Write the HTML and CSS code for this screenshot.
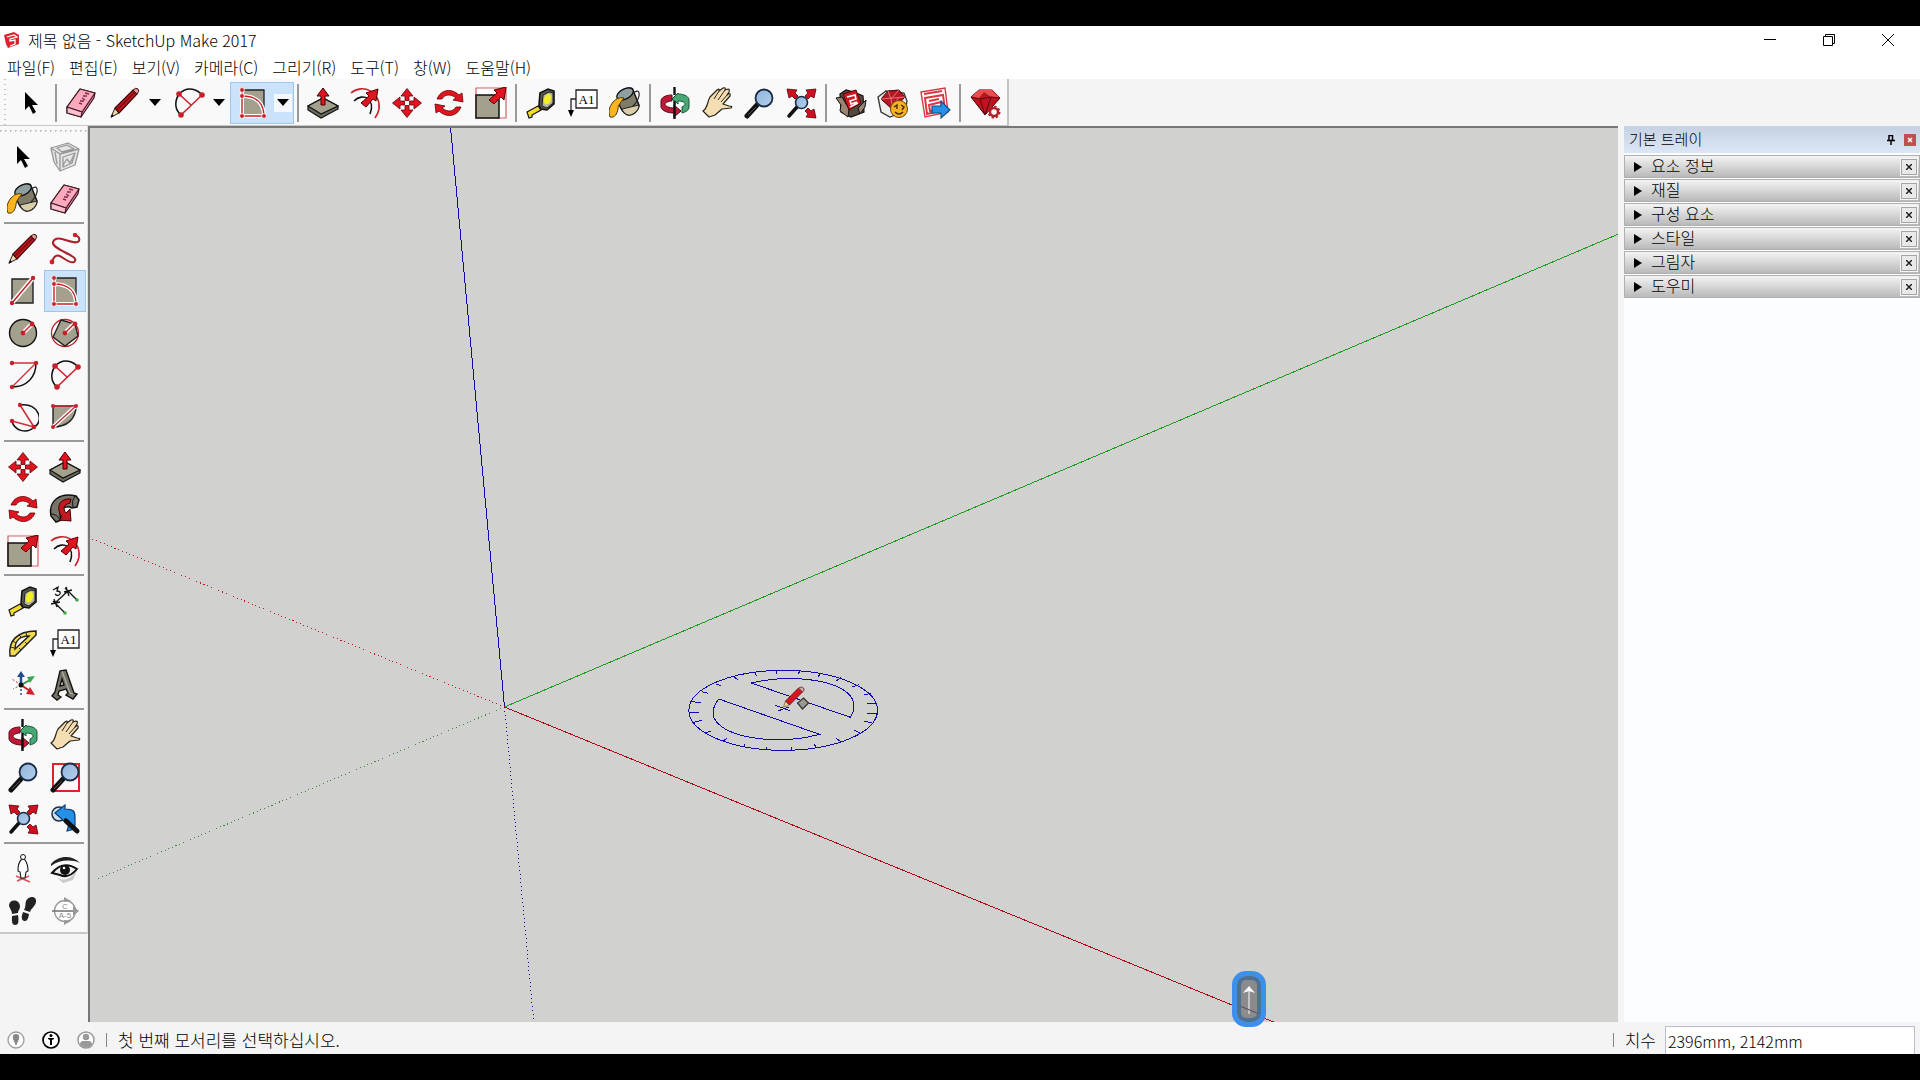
FILE: index.html
```
<!DOCTYPE html>
<html lang="ko">
<head>
<meta charset="utf-8">
<title>제목 없음 - SketchUp Make 2017</title>
<link rel="stylesheet" href="styles.css">
</head>
<body>
<svg class="defs" aria-hidden="true">
<defs>
<linearGradient id="lens" x1="0" y1="0" x2="1" y2="1"><stop offset="0" stop-color="#8fb4dc"/><stop offset="1" stop-color="#b4d0ec"/></linearGradient>
<symbol id="i-select" viewBox="0 0 32 32"><path d="M10 5v18l4-4 4 8 3-2-4-7h6z" fill="#000"/></symbol>
<symbol id="i-component" viewBox="0 0 32 32"><g fill="#e4e4e4" stroke="#989898" stroke-width="1.3" stroke-linejoin="round"><path d="M2 7l17-5 11 6-4 16-15 6-6-9z"/><path d="M2 7l9 6 19-5M11 13v17M6 11l2 12M14 16l12-4-3 10-9 4zM8 7l10-3 7 4-12 3z"/><path d="M14 24l4-6 3 4 4-8" fill="none"/></g></symbol>
<symbol id="i-eraser" viewBox="0 0 32 32"><g stroke="#3c1820" stroke-width="1.2" stroke-linejoin="round"><path d="M2 20L15 2l15 4-1 5-13 19L2 26z" fill="#ee7f9f"/><path d="M2 20L15 2l15 4-13 19z" fill="#ffa9bf"/><path d="M2 20l15 5-1 5L2 26z" fill="#fbc0d0"/></g><path d="M14 16l3 1M15 14l4 0M17 11l3 2M18 9l4 0M20 6l4 1" stroke="#7c2c44" stroke-width="1.4"/></symbol>
<symbol id="i-pencil" viewBox="0 0 32 32"><path d="M2 30l4-9 4 5z" fill="#efd7a6" stroke="#222" stroke-width="1"/><path d="M6 21L24 3l4 4-18 19z" fill="#c4161c" stroke="#3a0a0a" stroke-width="1.2"/><path d="M8 23L26 5" stroke="#7b0b10" stroke-width="1.4"/><path d="M24 3q3-3 5-1t-1 5z" fill="#d99" stroke="#411"/><path d="M1.500 31l1.500-4 2 2z" fill="#111"/></symbol>
<symbol id="i-arc2" viewBox="0 0 32 32"><path d="M6 7C15-2 25 3 29 8M6 7C1 15 2 23 8 28" fill="none" stroke="#111" stroke-width="1.5"/><path d="M6 7l12 11M29 8L8 28" stroke="#d0202c" stroke-width="1.6"/><g fill="#c8202a"><circle cx="6" cy="7" r="2.800"/><circle cx="29" cy="8" r="2.800"/><circle cx="8" cy="28" r="2.800"/></g></symbol>
<symbol id="i-rotrect" viewBox="0 0 32 32"><path d="M5 3h22v25H5z" fill="#a3a08d" stroke="#222" stroke-width="1.300"/><path d="M5 3v26h22C27 17 20 9 5 9" fill="none" stroke="#fff" stroke-width="4"/><path d="M5 3v26h22C27 17 20 9 5 9" fill="none" stroke="#c8202a" stroke-width="1.400"/><g fill="#c8202a" stroke="#fff" stroke-width=".8"><circle cx="5" cy="3" r="2.400"/><circle cx="5" cy="9" r="2.400"/><circle cx="5" cy="29" r="2.400"/><circle cx="27" cy="29" r="2.400"/></g></symbol>
<symbol id="i-pushpull" viewBox="0 0 32 32"><path d="M1 19l15-8 15 8v3l-17 9L1 23z" fill="#6d6b5e" stroke="#111" stroke-width="1.200"/><path d="M1 19l15-8 15 8-17 8z" fill="#a3a08d" stroke="#111" stroke-width="1.200"/><path d="M14 18h4V9h4l-6-8-6 8h4z" fill="#e01420" stroke="#400" stroke-width="1"/></symbol>
<symbol id="i-offset" viewBox="0 0 32 32"><path d="M2 6C14-4 32 5 30 22q-1 5-4 9" fill="none" stroke="#d0202c" stroke-width="1.600"/><path d="M5 14C14 5 27 12 21 27" fill="none" stroke="#111" stroke-width="1.600"/><path d="M12 16l8-7-3-3 12-4-2 12-3-2-7 8z" fill="#e01420" stroke="#500" stroke-width="1"/></symbol>
<symbol id="i-move" viewBox="0 0 32 32"><g fill="#e01420" stroke="#600" stroke-width=".8"><path id="mv" d="M14 13.500V9h-4l6-7.500L22 9h-4v4.500z"/><use href="#mv" transform="rotate(90 16 16)"/><use href="#mv" transform="rotate(180 16 16)"/><use href="#mv" transform="rotate(270 16 16)"/></g></symbol>
<symbol id="i-rotate" viewBox="0 0 32 32"><g fill="#e01420" stroke="#600" stroke-width=".8"><path id="rt" d="M4 12C8 2 19 1 26 8l3-2 1 9-10-2 3-2C17 6 11 8 9 12z"/><use href="#rt" transform="rotate(180 16 16)"/></g></symbol>
<symbol id="i-scale" viewBox="0 0 32 32"><path d="M1 1h30v30H1z" fill="#fff" stroke="#d2606a" stroke-width="1.200"/><path d="M1 8h23v23H1z" fill="#a3a08d" stroke="#111" stroke-width="1.500"/><path d="M14 13l8-7-3-3 12-3-2 13-3-3-7 7z" fill="#e01420" stroke="#500" stroke-width="1"/></symbol>
<symbol id="i-tape" viewBox="0 0 32 32"><path d="M2 25l11-6 3 4-9 5v2l-3 1z" fill="#f3dc2e" stroke="#111" stroke-width="1.200"/><path d="M15 6l8-4 6 2v13l-7 6-6-1-2-4z" fill="#5a594f" stroke="#111" stroke-width="1.600"/><path d="M18 8l6-3 4 1v10l-6 5-5-2z" fill="#b7b5a6" stroke="#222"/><ellipse cx="22.500" cy="12" rx="3.500" ry="5.500" fill="#f4ee26" transform="rotate(20 22 12)"/></symbol>
<symbol id="i-text" viewBox="0 0 32 32"><path d="M9 3h21v18H9z" fill="#fff" stroke="#222" stroke-width="1.300"/><path d="M9 12H4v12" fill="none" stroke="#222" stroke-width="1.300"/><path d="M1 23h6l-3 7z" fill="#000"/><text x="19.500" y="16.500" class="glyph">A1</text></symbol>
<symbol id="i-paint" viewBox="0 0 32 32"><path d="M9 7C15 0 23 0 24 3l6 15c0 6-7 11-11 10C13 26 8 17 9 7z" fill="#807b68" stroke="#111" stroke-width="1.400"/><path d="M13 22l17-4c0 6-7 11-11 10-3-1-5-3-6-6z" fill="#d9cdaa" stroke="#222"/><ellipse cx="16" cy="7" rx="9" ry="5" fill="#8fa0a0" stroke="#111" stroke-width="1.300" transform="rotate(-28 16 7)"/><path d="M24 6q7-5 6 3-1 5-6 10" fill="none" stroke="#222" stroke-width="1.200"/><path d="M15 11C10 10 7 12 4 15 0 20-1 25 1 30c5 1 7-3 8-8 0-4 3-7 6-11z" fill="#fcb51e" stroke="#4a3205" stroke-width="1"/></symbol>
<symbol id="i-orbit" viewBox="0 0 32 32"><path d="M13 8C6 8 2 11 2 14v6c1 4 7 6 13 6v4l7-6-7-6v3c-5 0-9-2-9-4 0-1 3-3 7-3z" fill="#c11836" stroke="#500a18" stroke-width="1"/><path d="M19 7c7 0 11 3 11 6v7c0 3-3 5-7 6v-6c2-1 3-2 3-3 0-2-3-3-7-3v3l-6-5 6-6z" fill="#48a774" stroke="#155434" stroke-width="1"/><path d="M15.500 0v8M15.500 14v18" stroke="#111" stroke-width="2.400"/></symbol>
<symbol id="i-hand" viewBox="0 0 32 32"><path d="M2 24c5-3 4-9 7-14L16 3q3-2 2 1l4-3q3-1 2 2l3-1q2 0 1 3l-2 3q4-3 3 1l-7 8 6 2q4 0 2 2l-9 1-7 6-6 2z" fill="#f6deb4" stroke="#2a2318" stroke-width="1.200" stroke-linejoin="round"/><path d="M18 4l-5 8M24 3l-7 10M27 7l-7 8" fill="none" stroke="#2a2318"/></symbol>
<symbol id="i-zoom" viewBox="0 0 32 32"><path d="M14 18L4 29" stroke="#111" stroke-width="5" stroke-linecap="round"/><path d="M13 20l-8 8" stroke="#555" stroke-width="1"/><circle cx="21" cy="11" r="8.500" fill="url(#lens)" stroke="#1c2c44" stroke-width="1.800"/></symbol>
<symbol id="i-extents" viewBox="0 0 32 32"><path d="M12 20L4 29" stroke="#111" stroke-width="3.500" stroke-linecap="round"/><circle cx="16.500" cy="15.500" r="6" fill="url(#lens)" stroke="#1c2c44" stroke-width="1.600"/><g fill="#d01020" stroke="#500" stroke-width=".8"><path d="M31 2l-2 9-3-2-3 3-3-3 3-3-2-3z"/><path d="M2 2l2 9 3-2 3 3 3-3-3-3 2-3z"/><path d="M31 31l-2-9-3 2-3-3-3 3 3 3-2 3z"/></g></symbol>
<symbol id="i-warehouse" viewBox="0 0 32 32"><path d="M5 7l6-4 8 2 9 4 1 16-13 5L6 25z" fill="#55483c" stroke="#111" stroke-width="1.200"/><path d="M1 11l6-1 7 12-1 8-8-6 1-6zM31 13l-8 8 2 6 5-7z" fill="#9a8471" stroke="#111"/><path d="M8 7l13-4 5 13-12 7z" fill="#d01722" stroke="#500"/><path d="M12 10l8-2 1 4-6 2 1 3 6-2M15 20l8-4" stroke="#fff" stroke-width="1.600" fill="none"/></symbol>
<symbol id="i-extension" viewBox="0 0 32 32"><path d="M1 10l8-6 18 2 3 8-2 10-15 6-9-5z" fill="#eee" stroke="#333" stroke-width="1.300"/><path d="M4 12l7-8 11-1 6 7-12 13z" fill="#b31825" stroke="#400"/><path d="M4 12l24-2M11 4l3 8 8-9M14 12l2 11 5-12" fill="none" stroke="#f07078"/><circle cx="22" cy="22" r="8.500" fill="#f6b125" stroke="#6a4305"/><path d="M17 20l3-2v4M24 18l3 2-2 3M18 25q4 4 8 0" fill="none" stroke="#432a05" stroke-width="1.400"/></symbol>
<symbol id="i-layout" viewBox="0 0 32 32"><path d="M2 5l24-4 3 24-23 5z" fill="#fff" stroke="#d73843" stroke-width="1.400"/><path d="M5 7l18-3M6 11l18-3 2 15-18 4zM10 14l10-2M10 18l12-3 1 7-12 2z" fill="none" stroke="#d73843" stroke-width="2"/><path d="M13 19h9v-5l9 9-9 8v-5h-9z" fill="#2590e8" stroke="#104a85" stroke-width="1.100"/></symbol>
<symbol id="i-ruby" viewBox="0 0 32 32"><path d="M2 10l8-7h13l8 8-15 17z" fill="#bc1420" stroke="#400"/><path d="M2 10l8-7h13l8 8-9-1-7-5-5 6z" fill="#ee4b50"/><path d="M2 10l9 2 11-2 9 1M11 12l5 16 6-18" fill="none" stroke="#5e0710"/><circle cx="25" cy="25" r="4" fill="#fff" stroke="#b3202a" stroke-width="2.500"/><circle cx="25" cy="25" r="5.700" fill="none" stroke="#b3202a" stroke-width="1.600" stroke-dasharray="2.400 2"/></symbol>
<symbol id="i-freehand" viewBox="0 0 32 32"><path d="M3 29c5-16 14 3 22 0C33 23 2 17 4 9 8-1 25 14 30 8c1-3-1-5-4-6" fill="none" stroke="#a8202a" stroke-width="2"/><circle cx="3" cy="29" r="2.400" fill="#d0202c"/><circle cx="26" cy="2" r="2.200" fill="#d0202c"/></symbol>
<symbol id="i-rect" viewBox="0 0 32 32"><path d="M5 4h21v24H5z" fill="#a3a08d" stroke="#222" stroke-width="1.400"/><path d="M5 28L26 3" stroke="#fff" stroke-width="4.500"/><path d="M5 28L26 3" stroke="#c8202a" stroke-width="1.500"/><circle cx="5" cy="28" r="2.200" fill="#c8202a"/><circle cx="26" cy="3" r="2.200" fill="#c8202a"/></symbol>
<symbol id="i-circle" viewBox="0 0 32 32"><circle cx="16" cy="16" r="13.500" fill="#a3a08d" stroke="#111" stroke-width="1.400"/><path d="M16 16l9-9" stroke="#fff" stroke-width="4.500"/><path d="M16 16l9-9" stroke="#c8202a" stroke-width="1.500"/><circle cx="16" cy="16" r="2.400" fill="#c8202a"/><circle cx="25" cy="7" r="2.400" fill="#c8202a"/></symbol>
<symbol id="i-polygon" viewBox="0 0 32 32"><circle cx="16" cy="16" r="13.500" fill="#fff" stroke="#c8202a" stroke-width="1.300"/><path d="M12 3l14 4 3 12-13 10-12-9z" fill="#a3a08d" stroke="#222" stroke-width="1.400"/><path d="M16 16l9-9" stroke="#fff" stroke-width="4.500"/><path d="M16 16l9-9" stroke="#c8202a" stroke-width="1.500"/><circle cx="16" cy="16" r="2.400" fill="#c8202a"/><circle cx="26" cy="7" r="2.400" fill="#c8202a"/></symbol>
<symbol id="i-arc" viewBox="0 0 32 32"><path d="M29 4C29 18 20 28 5 28" fill="none" stroke="#111" stroke-width="1.500"/><path d="M5 4h24L5 28" fill="none" stroke="#d0303a" stroke-width="1.400"/><g fill="#c8202a"><circle cx="5" cy="4" r="2.200"/><circle cx="29" cy="4" r="2.200"/><circle cx="5" cy="28" r="2.200"/></g></symbol>
<symbol id="i-arc3" viewBox="0 0 32 32"><path d="M13 4C33 1 37 22 27 26 19 34 7 29 5 20" fill="none" stroke="#111" stroke-width="1.500"/><path d="M13 4l14 22L5 20" fill="none" stroke="#d0303a" stroke-width="1.600"/><g fill="#c8202a"><circle cx="13" cy="4" r="2.200"/><circle cx="27" cy="26" r="2.200"/><circle cx="5" cy="20" r="2.200"/></g></symbol>
<symbol id="i-pie" viewBox="0 0 32 32"><path d="M4 5h23C27 18 18 26 4 26z" fill="#a3a08d" stroke="#222" stroke-width="1.400"/><path d="M4 26L27 5" stroke="#fff" stroke-width="4"/><path d="M4 26L27 5H4" fill="none" stroke="#c03038" stroke-width="1.400"/><g fill="#c8202a"><circle cx="4" cy="5" r="2"/><circle cx="27" cy="5" r="2"/><circle cx="4" cy="26" r="2"/></g></symbol>
<symbol id="i-follow" viewBox="0 0 32 32"><path d="M27 3C12-1-1 7 2 23l5 6 5-2C9 18 15 11 23 15l5-1 2-7z" fill="#77756a" stroke="#111" stroke-width="1.500"/><path d="M2 21q6 0 9 6M26 3q-4 5-2 11" stroke="#111" fill="none"/><path d="M11 21C7 11 13 5 22 6l-1 4c-7 2-7 6-4 10l4-4 1 12-12-1 3-3z" fill="#c31923" stroke="#400"/></symbol>
<symbol id="i-dimension" viewBox="0 0 32 32"><path d="M6 18L19 6M4 16l12 12M16 3l12 12M2 19l9-2M5 14l3 8M15 7l8-2M17 2l3 9" fill="none" stroke="#111" stroke-width="1.300"/><path d="M4 5l5-3-1 4q4 0 3 3-2 3-5 0" fill="none" stroke="#111" stroke-width="1.300"/><circle cx="16" cy="28" r="1.800" fill="#48a748"/><circle cx="28" cy="15" r="1.800" fill="#48a748"/></symbol>
<symbol id="i-protractor" viewBox="0 0 32 32"><path fill-rule="evenodd" d="M3 29C1 14 10 4 29 4v4L8 29zM8 22L22 9C13 9 8 14 8 22z" fill="#f2d94e" stroke="#222" stroke-width="1.500"/><path d="M4 20l3 1M6 14l3 2M12 8l2 2M19 6l1 3M12 21l2 2M18 15l2 2" stroke="#222"/></symbol>
<symbol id="i-axes" viewBox="0 0 32 32"><path d="M14 16V6" stroke="#224d91" stroke-width="2.500"/><path d="M10 8l4-6 4 6z" fill="#224d91"/><path d="M14 16l9-5" stroke="#2f8d42" stroke-width="2"/><path d="M20 8l8-1-5 7z" fill="#3da34e"/><path d="M14 16l9 6" stroke="#c0202a" stroke-width="2"/><path d="M23 18l5 8-9-1z" fill="#d0202c"/><path d="M14 16l-9-6" stroke="#d0202c" stroke-dasharray="2 2"/><path d="M14 16v12" stroke="#224d91" stroke-width="1.500" stroke-dasharray="2 2"/><path d="M14 16l-8 4" stroke="#2f8d42" stroke-dasharray="2 2"/><circle cx="14" cy="16" r="2.500" fill="#111"/></symbol>
<symbol id="i-3dtext" viewBox="0 0 32 32"><path fill-rule="evenodd" d="M11 2l6-1 8 23 3 1-4 5-7-4 2-2-2-4-7 2-1 4 3 2-4 3-5-4 3-4zM11 17l4-1-2-6z" fill="#77756a" stroke="#111" stroke-width="1.400"/><path d="M13 2l8 22 3 1" fill="none" stroke="#c0beb0" stroke-width="1"/></symbol>
<symbol id="i-zoomwin" viewBox="0 0 32 32"><path d="M4 3h26v27H4z" fill="none" stroke="#e0202c" stroke-width="2"/><use href="#i-zoom" width="32" height="32"/></symbol>
<symbol id="i-previous" viewBox="0 0 32 32"><circle cx="10" cy="11" r="7" fill="#cfdfee" stroke="#1c2c44" stroke-width="1.500"/><path d="M6 10l10-8v4c8 0 10 2 10 8v12l-8 2 2-7q1-4-4-5v3z" fill="#2590e8" stroke="#123d6c" stroke-width="1.200"/><path d="M17 18l11 10" stroke="#111" stroke-width="5" stroke-linecap="round"/></symbol>
<symbol id="i-camera" viewBox="0 0 32 32"><path d="M10 28l12-5M9 23l14 6" stroke="#e05058" stroke-width="1.600"/><path d="M14 7q2-2 4 0 3 4 3 11l-2 1-1 6h-4l-1-6-2-1q0-8 3-11z" fill="#fff" stroke="#111" stroke-width="1.100"/><circle cx="16" cy="4" r="2.500" fill="#fff" stroke="#111"/></symbol>
<symbol id="i-look" viewBox="0 0 32 32"><path d="M3 20c7 9 16 9 25-2l-4 9-10 3z" fill="#cacaca"/><path d="M2 11C10 2 23 2 31 10 22 6 10 7 2 13z" fill="#222"/><path d="M3 20Q14 7 28 16 20 26 11 22z" fill="#eee" stroke="#111" stroke-width="2"/><circle cx="16" cy="17" r="5" fill="#111"/><circle cx="15" cy="15" r="1.300" fill="#fff"/></symbol>
<symbol id="i-walk" viewBox="0 0 32 32"><g fill="#222"><path d="M2 10c1-6 10-6 11 1 0 4-2 4-2 7l-6 1c0-4-3-6-3-9zM5 21l6-1q2 10-3 10-4 0-3-9z"/><path d="M19 6c3-6 11-5 10 1-1 5-5 6-6 10l-6-2c2-3 1-6 2-9zM16 17l6 2q-1 8-5 7-4-1-1-9z"/></g></symbol>
<symbol id="i-section" viewBox="0 0 32 32"><circle cx="16" cy="16" r="10.500" fill="#fff" stroke="#999" stroke-width="1.300"/><path d="M3 16h25" stroke="#777" stroke-width="1.600"/><path d="M15 2l7 4-7 1zM15 30l7-4-7-1zM24 11l6 5-6 5z" fill="#999"/><text x="16" y="14" class="mini">C</text><text x="16" y="23" class="mini">A-5</text></symbol>
</defs>
</svg>

<div class="app">
<header class="titlebar">
  <svg class="logo" viewBox="0 0 16 18"><path d="M0 4l10-3 5 3v9L4 17l-2-4z" fill="#d8242c"/><path d="M3 6l7-2 3 2-7 2v2l5-1v4l-5 2" fill="none" stroke="#fff" stroke-width="1.300"/></svg>
  <h1 class="title">제목 없음 - SketchUp Make 2017</h1>
  <div class="window-controls">
    <button aria-label="최소화"><svg viewBox="0 0 14 14"><path d="M1 6.500h12"/></svg></button>
    <button aria-label="이전 크기로"><svg viewBox="0 0 14 14"><path d="M1.500 3.500h9v9h-9zM3.500 3.500v-2h9v9h-2"/></svg></button>
    <button aria-label="닫기"><svg viewBox="0 0 14 14"><path d="M1 1l12 12M13 1L1 13"/></svg></button>
  </div>
</header>
<nav class="menubar">
  <button>파일(F)</button><button>편집(E)</button><button>보기(V)</button><button>카메라(C)</button><button>그리기(R)</button><button>도구(T)</button><button>창(W)</button><button>도움말(H)</button>
</nav>

<div class="toolbar-row">
<div class="toolbar" role="toolbar">
  <button class="tool" aria-label="선택"><svg><use href="#i-select"/></svg></button>
  <span class="vsep"></span>
  <button class="tool" aria-label="지우개"><svg><use href="#i-eraser"/></svg></button>
  <div class="split"><button class="tool" aria-label="선"><svg><use href="#i-pencil"/></svg></button><button class="drop" aria-label="선 도구 더 보기"><i></i></button></div>
  <div class="split"><button class="tool" aria-label="호"><svg><use href="#i-arc2"/></svg></button><button class="drop" aria-label="호 도구 더 보기"><i></i></button></div>
  <div class="split active"><button class="tool" aria-label="회전된 직사각형"><svg><use href="#i-rotrect"/></svg></button><button class="drop" aria-label="도형 더 보기"><i></i></button></div>
  <span class="vsep"></span>
  <button class="tool" aria-label="밀기/끌기"><svg><use href="#i-pushpull"/></svg></button>
  <button class="tool" aria-label="간격띄우기"><svg><use href="#i-offset"/></svg></button>
  <button class="tool" aria-label="이동"><svg><use href="#i-move"/></svg></button>
  <button class="tool" aria-label="회전"><svg><use href="#i-rotate"/></svg></button>
  <button class="tool" aria-label="배율"><svg><use href="#i-scale"/></svg></button>
  <span class="vsep"></span>
  <button class="tool" aria-label="줄자"><svg><use href="#i-tape"/></svg></button>
  <button class="tool" aria-label="텍스트"><svg><use href="#i-text"/></svg></button>
  <button class="tool" aria-label="페인트통"><svg><use href="#i-paint"/></svg></button>
  <span class="vsep"></span>
  <button class="tool" aria-label="궤도"><svg><use href="#i-orbit"/></svg></button>
  <button class="tool" aria-label="팬"><svg><use href="#i-hand"/></svg></button>
  <button class="tool" aria-label="확대/축소"><svg><use href="#i-zoom"/></svg></button>
  <button class="tool" aria-label="범위 확대/축소"><svg><use href="#i-extents"/></svg></button>
  <span class="vsep"></span>
  <button class="tool" aria-label="3D Warehouse"><svg><use href="#i-warehouse"/></svg></button>
  <button class="tool" aria-label="Extension Warehouse"><svg><use href="#i-extension"/></svg></button>
  <button class="tool" aria-label="LayOut"><svg><use href="#i-layout"/></svg></button>
  <span class="vsep"></span>
  <button class="tool" aria-label="확장 관리자"><svg><use href="#i-ruby"/></svg></button>
</div>
</div>

<main class="workspace">
<div class="toolbox" role="toolbar">
  <div class="group">
    <button class="tool" aria-label="선택"><svg><use href="#i-select"/></svg></button>
    <button class="tool" aria-label="구성 요소 만들기"><svg><use href="#i-component"/></svg></button>
    <button class="tool" aria-label="페인트통"><svg><use href="#i-paint"/></svg></button>
    <button class="tool" aria-label="지우개"><svg><use href="#i-eraser"/></svg></button>
  </div>
  <div class="group">
    <button class="tool" aria-label="선"><svg><use href="#i-pencil"/></svg></button>
    <button class="tool" aria-label="자유선"><svg><use href="#i-freehand"/></svg></button>
    <button class="tool" aria-label="직사각형"><svg><use href="#i-rect"/></svg></button>
    <button class="tool active" aria-label="회전된 직사각형"><svg><use href="#i-rotrect"/></svg></button>
    <button class="tool" aria-label="원"><svg><use href="#i-circle"/></svg></button>
    <button class="tool" aria-label="다각형"><svg><use href="#i-polygon"/></svg></button>
    <button class="tool" aria-label="호"><svg><use href="#i-arc"/></svg></button>
    <button class="tool" aria-label="2점 호"><svg><use href="#i-arc2"/></svg></button>
    <button class="tool" aria-label="3점 호"><svg><use href="#i-arc3"/></svg></button>
    <button class="tool" aria-label="파이"><svg><use href="#i-pie"/></svg></button>
  </div>
  <div class="group">
    <button class="tool" aria-label="이동"><svg><use href="#i-move"/></svg></button>
    <button class="tool" aria-label="밀기/끌기"><svg><use href="#i-pushpull"/></svg></button>
    <button class="tool" aria-label="회전"><svg><use href="#i-rotate"/></svg></button>
    <button class="tool" aria-label="따라가기"><svg><use href="#i-follow"/></svg></button>
    <button class="tool" aria-label="배율"><svg><use href="#i-scale"/></svg></button>
    <button class="tool" aria-label="간격띄우기"><svg><use href="#i-offset"/></svg></button>
  </div>
  <div class="group">
    <button class="tool" aria-label="줄자"><svg><use href="#i-tape"/></svg></button>
    <button class="tool" aria-label="치수"><svg><use href="#i-dimension"/></svg></button>
    <button class="tool" aria-label="각도기"><svg><use href="#i-protractor"/></svg></button>
    <button class="tool" aria-label="텍스트"><svg><use href="#i-text"/></svg></button>
    <button class="tool" aria-label="축"><svg><use href="#i-axes"/></svg></button>
    <button class="tool" aria-label="3D 텍스트"><svg><use href="#i-3dtext"/></svg></button>
  </div>
  <div class="group">
    <button class="tool" aria-label="궤도"><svg><use href="#i-orbit"/></svg></button>
    <button class="tool" aria-label="팬"><svg><use href="#i-hand"/></svg></button>
    <button class="tool" aria-label="확대/축소"><svg><use href="#i-zoom"/></svg></button>
    <button class="tool" aria-label="창 확대/축소"><svg><use href="#i-zoomwin"/></svg></button>
    <button class="tool" aria-label="범위 확대/축소"><svg><use href="#i-extents"/></svg></button>
    <button class="tool" aria-label="이전"><svg><use href="#i-previous"/></svg></button>
  </div>
  <div class="group">
    <button class="tool" aria-label="카메라 배치"><svg><use href="#i-camera"/></svg></button>
    <button class="tool" aria-label="둘러보기"><svg><use href="#i-look"/></svg></button>
    <button class="tool" aria-label="이동 시점"><svg><use href="#i-walk"/></svg></button>
    <button class="tool" aria-label="단면"><svg><use href="#i-section"/></svg></button>
  </div>
</div>

<section class="canvas" aria-label="모델링 영역">
  <svg class="scene" viewBox="0 0 1529 894" preserveAspectRatio="xMidYMid slice">
    <g fill="none" shape-rendering="crispEdges">
      <path d="M415 579L361 -1" stroke="#1208b0"/>
      <path d="M415 579L1529 106" stroke="#1f9a20"/>
      <path d="M415 579L1184 894" stroke="#b00818"/>
      <path d="M415 579L3 411" stroke="#c01818" stroke-dasharray="1 3"/>
      <path d="M415 579L3 753" stroke="#3f8a3f" stroke-dasharray="1 3"/>
      <path d="M415 579L444 891" stroke="#1208b0" stroke-dasharray="1 3"/>
    </g>
    <g class="protractor" transform="translate(580 522) scale(.33333)">
      <ellipse cx="341" cy="181" rx="283" ry="120"/>
      <path d="M245 99C370 70 490 92 533 128C560 150 556 180 543 202Z"/>
      <path d="M148 147L450 253C340 283 210 268 158 231C125 208 122 180 148 147Z"/>
      <path d="M322 61v10M390 63l-3 9M455 69l-10 11M515 83l-15 10M568 104l-20 7M605 130l-22 5M622 160h-30M622 191l-29-1M608 218l-25-4M571 248l-18-8M515 275l-15-9M440 292l-7-11M367 301l-3-11M290 301v-11M220 292l8-11M160 275l12-11M105 249l20-6M70 218l26-7M58 187h30M68 155l25 3M96 125l21 5M138 101l17 7M195 82l12 9M256 67l5 10M318 166l44 16M325 183l33-12"/>
    </g>
    <g transform="translate(692 560)">
      <path d="M2 19l2-6 4 4z" fill="#ecd3a0" stroke="#654" stroke-width=".7"/><path d="M4 13L17 0l4 4L8 17z" fill="#d8141c" stroke="#5a1010" stroke-width=".8"/><path d="M17 0q3-2 5 0t-1 4z" fill="#caa" stroke="#622" stroke-width=".8"/><path d="M22 10l5 5-6 6-5-6z" fill="#9b998d" stroke="#333" stroke-width="1.200"/>
    </g>
  </svg>
  <div class="key"><svg viewBox="0 0 16 36"><path d="M8 7v26" stroke="#c4c4c4" stroke-width="2"/><path d="M2 12l6-7 6 7-6-2z" fill="#fff"/><path d="M0 25.500l16 6.500" stroke="#5e4652"/></svg></div>
</section>

<aside class="tray">
  <div class="tray-head"><h2>기본 트레이</h2>
    <button class="pin" aria-label="고정"><svg viewBox="0 0 8 10"><path d="M2 0v5M5.500 0v5M2 .500h4M0 5.500h8M4 6v4" stroke="#000" stroke-width="1.500" fill="none"/></svg></button>
    <button class="tray-close" aria-label="닫기"><svg viewBox="0 0 6 6"><path d="M1 1l4 4M5 1L1 5"/></svg></button>
  </div>
  <div class="panel"><button class="expand"><i></i>요소 정보</button><button class="close" aria-label="닫기"><svg viewBox="0 0 6 6"><path d="M0 0l6 6M6 0L0 6"/></svg></button></div>
  <div class="panel"><button class="expand"><i></i>재질</button><button class="close" aria-label="닫기"><svg viewBox="0 0 6 6"><path d="M0 0l6 6M6 0L0 6"/></svg></button></div>
  <div class="panel"><button class="expand"><i></i>구성 요소</button><button class="close" aria-label="닫기"><svg viewBox="0 0 6 6"><path d="M0 0l6 6M6 0L0 6"/></svg></button></div>
  <div class="panel"><button class="expand"><i></i>스타일</button><button class="close" aria-label="닫기"><svg viewBox="0 0 6 6"><path d="M0 0l6 6M6 0L0 6"/></svg></button></div>
  <div class="panel"><button class="expand"><i></i>그림자</button><button class="close" aria-label="닫기"><svg viewBox="0 0 6 6"><path d="M0 0l6 6M6 0L0 6"/></svg></button></div>
  <div class="panel"><button class="expand"><i></i>도우미</button><button class="close" aria-label="닫기"><svg viewBox="0 0 6 6"><path d="M0 0l6 6M6 0L0 6"/></svg></button></div>
</aside>
</main>

<footer class="statusbar">
  <div class="status-icons">
    <button aria-label="지리적 위치"><svg viewBox="0 0 18 18"><circle cx="9" cy="9" r="8" fill="#fff" stroke="#999" stroke-width="1.300"/><path d="M9 15L6 8q-1-5 3-5t3 5z" fill="#888"/></svg></button>
    <button aria-label="크레딧"><svg viewBox="0 0 18 18"><circle cx="9" cy="9" r="8" fill="#fff" stroke="#000" stroke-width="1.700"/><circle cx="9" cy="4.500" r="1.500"/><path d="M6 7h6v1l-2 1v5H8V9L6 8z"/></svg></button>
    <button aria-label="로그인"><svg viewBox="0 0 18 18"><circle cx="9" cy="9" r="8" fill="#fff" stroke="#999" stroke-width="1.500"/><circle cx="9" cy="6" r="3.200" fill="#999"/><path d="M3 14q0-4 3-4h6q3 0 3 4-6 5-12 0z" fill="#999"/></svg></button>
  </div>
  <span class="bar"></span>
  <p class="hint">첫 번째 모서리를 선택하십시오.</p>
  <span class="bar"></span>
  <label for="vcb">치수</label>
  <input id="vcb" type="text" value="2396mm, 2142mm">
</footer>
</div>
</body>
</html>
```
FILE: styles.css
```
* { box-sizing: border-box; }
body {
  margin: 0;
  min-height: 100vh;
  padding: 26px 0;
  display: flex;
  background: #000;
  color: #000;
  font: 300 16px/20px "Noto Sans CJK KR", sans-serif;
}
button {
  margin: 0;
  padding: 0;
  border: 0;
  background: none;
  color: inherit;
  font: inherit;
}
svg { display: block; }
.defs { position: absolute; width: 0; height: 0; }
.glyph { font: 13px "Liberation Serif", serif; text-anchor: middle; }
.mini { font: 8px "Liberation Sans", sans-serif; text-anchor: middle; fill: #888; }

.app {
  flex: 1;
  min-width: 0;
  display: flex;
  flex-direction: column;
  background: #f4f4f5;
}

/* title and menus */
.titlebar {
  display: flex;
  align-items: center;
  height: 28px;
  padding: 0 3px 0 4px;
  background: #fff;
}
.logo { width: 16px; height: 18px; }
.title { margin: 0 0 0 8px; font-size: 16px; font-weight: inherit; }
.window-controls { display: flex; margin-left: auto; }
.window-controls button { width: 59px; height: 28px; display: grid; place-items: center; }
.window-controls svg { width: 14px; height: 14px; fill: none; stroke: #000; stroke-width: 1; }
.menubar { display: flex; height: 25px; background: #fff; }
.menubar button { padding: 0 7px; }

/* horizontal toolbar */
.toolbar-row { display: flex; height: 47px; }
.toolbar {
  display: flex;
  align-items: center;
  padding: 1px 1px 0 10px;
  border-right: 2px solid #c4c4c4;
  border-bottom: 1px solid #c8c8c8;
  background: #f9f9fa radial-gradient(circle, #c2c2c2 1px, transparent 1px) 3px 3px / 4px 5px repeat-y;
}
.tool { width: 42px; height: 42px; display: grid; place-items: center; }
.tool svg { width: 32px; height: 32px; }
.vsep { width: 2px; height: 38px; margin: 0 3px; background: #9a9a9a; }
.split { display: flex; width: 64px; height: 42px; }
.split .tool { width: 44px; padding-left: 2px; }
.drop { width: 18px; display: grid; place-items: center; }
.drop i { border: 6px solid transparent; border-top: 7px solid #000; border-bottom: 0; }
.active { background: #cbe3fa; outline: 1px solid #9cc8ee; outline-offset: -1px; }
.active .drop { height: 18px; margin: auto 0; background: #f4f8fc; }

/* work area */
.workspace { flex: 1; display: flex; min-height: 0; }
.toolbox {
  align-self: flex-start;
  width: 88px;
  padding: 10px 0 0 2px;
  border-right: 1px solid #ddd;
  border-bottom: 2px solid #c8c8c8;
  background: #f9f9fa radial-gradient(circle, #c2c2c2 1px, transparent 1px) 3px 2px / 5px 5px repeat-x;
}
.group { display: grid; grid-template-columns: 42px 42px; }
.group + .group::before {
  content: "";
  grid-column: 1 / -1;
  height: 2px;
  margin: 2px 2px 4px;
  background: #9a9a9a;
}
.canvas {
  flex: 1;
  min-width: 0;
  position: relative;
  border: solid #777;
  border-width: 2px 0 0 2px;
  background: #d1d1cf;
}
.scene { width: 100%; height: 100%; }
.protractor * { fill: none; stroke: #1208b0; stroke-width: 1; vector-effect: non-scaling-stroke; shape-rendering: crispEdges; }
.key {
  position: absolute;
  left: 1142px;
  bottom: -5px;
  width: 34px;
  height: 56px;
  padding: 4px;
  border: 5px solid #3b90ee;
  border-radius: 14px;
  background: #8b8b8d;
  box-shadow: inset 0 0 0 4px #4d7195;
}
.key svg { width: 16px; height: 38px; }

/* tray */
.tray { width: 302px; border-left: 6px solid #f4f4f5; background: #fbfeff; }
.tray-head {
  display: flex;
  align-items: center;
  height: 27px;
  margin-bottom: 2px;
  padding: 0 4px 0 5px;
  background: linear-gradient(#c5d1e2, #dce6f5);
}
.tray-head h2 { flex: 1; margin: 0; padding-bottom: 2px; font-size: 15px; font-weight: inherit; }
.pin svg { width: 8px; height: 10px; }
.tray-close { width: 12px; height: 12px; margin-left: 9px; padding: 3px; background: #c0504f; }
.tray-close path { stroke: #fff; stroke-width: 1.5; }
.panel {
  display: flex;
  align-items: center;
  height: 23px;
  margin-bottom: 1px;
  padding: 0 2px 0 9px;
  border: 1px solid #b0b0b0;
  background: linear-gradient(#f4f4f4, #b9b9b9);
}
.expand { flex: 1; display: flex; align-items: center; gap: 9px; padding-bottom: 3px; text-align: left; }
.expand i { margin-top: 3px; border: 5px solid transparent; border-left: 8px solid #000; border-right: 0; }
.close { width: 16px; height: 16px; padding: 4px; border: 1px solid #a4a4a4; outline: 1px solid #f6f6f6; background: #e9e9e9; }
.close path { stroke: #222; stroke-width: 1.5; }

/* status bar */
.statusbar { display: flex; align-items: center; height: 30px; margin-top: 2px; padding: 2px 5px 0 7px; }
.status-icons { display: flex; gap: 17px; }
.status-icons svg { width: 18px; height: 18px; }
.bar { width: 1px; height: 14px; margin: 0 11px; background: #888; }
.hint { flex: 1; margin: 0; font-size: 17px; }
.statusbar label { margin-right: 9px; font-size: 17px; }
.statusbar input {
  align-self: flex-end;
  width: 250px;
  height: 28px;
  padding: 0 2px;
  border: 1px solid #b8bfcc;
  border-bottom: 0;
  background: #fff;
  color: #000;
  font: inherit;
}
```
